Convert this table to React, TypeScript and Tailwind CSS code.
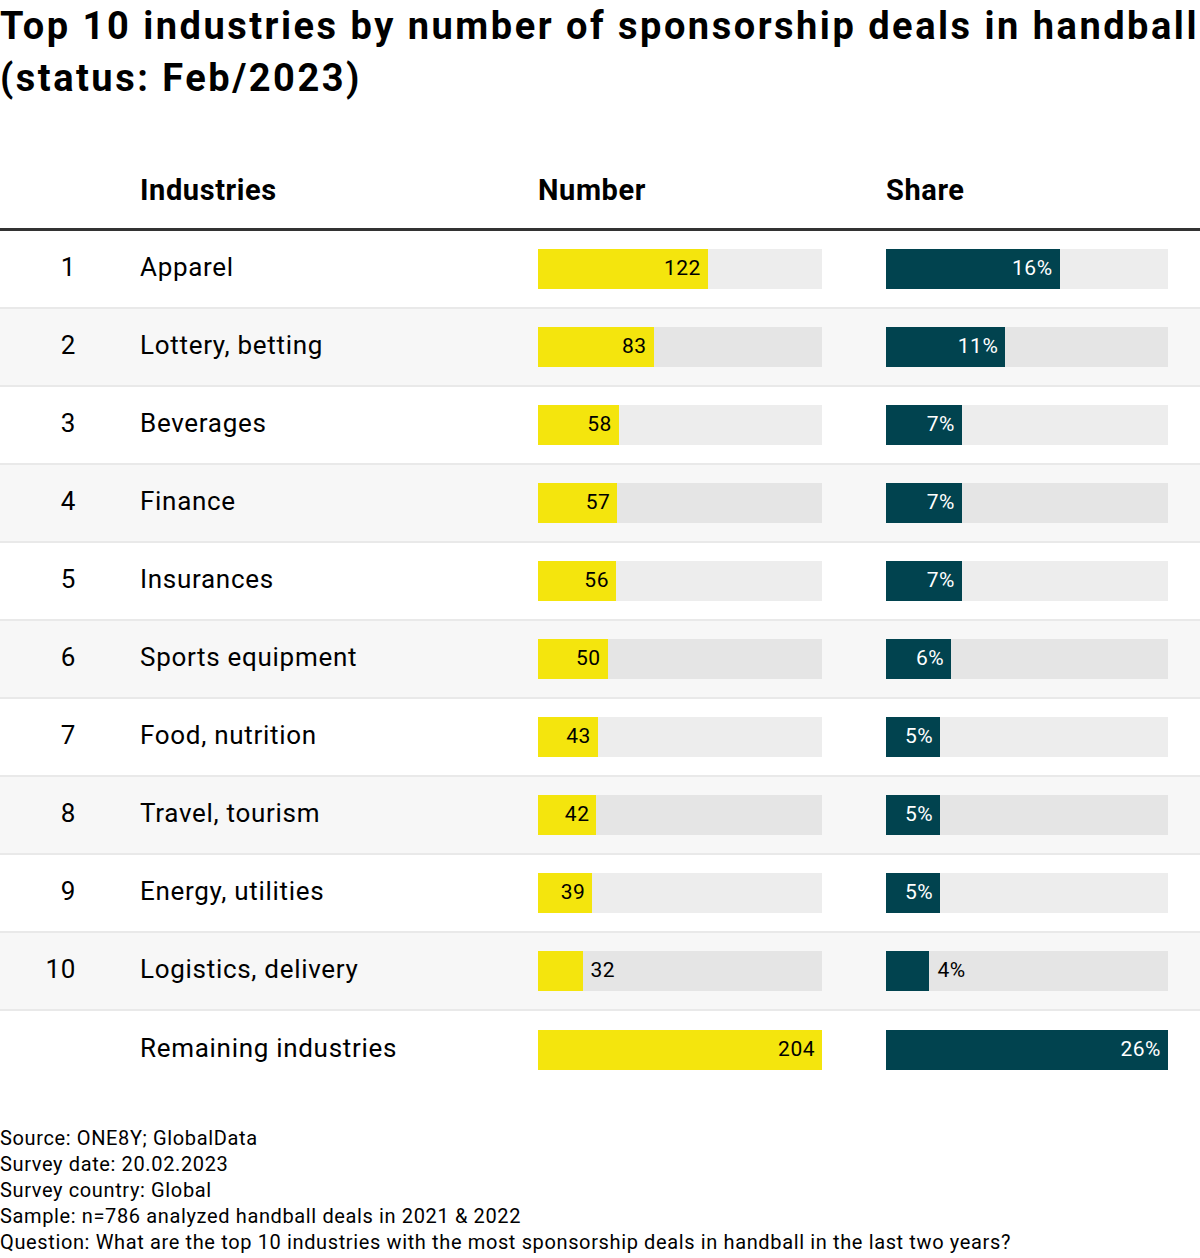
import React from "react";

type Row = { rank?: number; name: string; num: number; share: number };

const rows: Row[] = [
  { rank: 1, name: "Apparel", num: 122, share: 16 },
  { rank: 2, name: "Lottery, betting", num: 83, share: 11 },
  { rank: 3, name: "Beverages", num: 58, share: 7 },
  { rank: 4, name: "Finance", num: 57, share: 7 },
  { rank: 5, name: "Insurances", num: 56, share: 7 },
  { rank: 6, name: "Sports equipment", num: 50, share: 6 },
  { rank: 7, name: "Food, nutrition", num: 43, share: 5 },
  { rank: 8, name: "Travel, tourism", num: 42, share: 5 },
  { rank: 9, name: "Energy, utilities", num: 39, share: 5 },
  { rank: 10, name: "Logistics, delivery", num: 32, share: 4 },
  { name: "Remaining industries", num: 204, share: 26 },
];

const NUM_W = 284;
const SHARE_W = 282;

function Bar({
  value,
  max,
  width,
  label,
  dark,
}: {
  value: number;
  max: number;
  width: number;
  label: string;
  dark: boolean;
}) {
  const w = (value / max) * width;
  const inside = w >= 50;
  return (
    <div className="flex h-[40px] bg-black/[0.07]" style={{ width }}>
      <div
        className={
          "flex h-full items-center justify-end pr-[7px] " +
          (dark ? "bg-[#01434f] text-white" : "bg-[#f4e50d] text-black")
        }
        style={{ width: w }}
      >
        {inside && <span className="text-[21px] tracking-[0.5px]">{label}</span>}
      </div>
      {!inside && (
        <div className="flex h-full items-center pl-[8px] text-[21px] tracking-[0.5px] text-black">
          {label}
        </div>
      )}
    </div>
  );
}

export default function App() {
  return (
    <div
      className="w-[1200px] bg-white text-black"
      style={{ fontFamily: "Roboto, 'Liberation Sans', sans-serif" }}
    >
      <h1 className="whitespace-nowrap text-[38px] font-bold leading-[52px] tracking-[2.5px]">
        Top 10 industries by number of sponsorship deals in handball
        <br />
        (status: Feb/2023)
      </h1>

      <div className="grid grid-cols-[76px_64px_398px_284px_64px_282px_32px] items-center border-b-[3px] border-[#333333] pt-[68px] pb-[20px] text-[29px] font-bold leading-[36px] tracking-[0.6px]">
        <div />
        <div />
        <div>Industries</div>
        <div>Number</div>
        <div />
        <div>Share</div>
        <div />
      </div>

      {rows.map((r, i) => (
        <div
          key={r.name}
          className={
            "grid h-[78px] grid-cols-[76px_64px_398px_284px_64px_282px_32px] items-center text-[26px] tracking-[0.7px] " +
            (i % 2 === 1 ? "bg-[#f7f7f7] " : "bg-white ") +
            (i < rows.length - 1 ? "border-b-2 border-[#e9e9e9]" : "")
          }
        >
          <div className="pb-[3px] text-right">{r.rank ?? ""}</div>
          <div />
          <div className="pb-[3px]">{r.name}</div>
          <Bar value={r.num} max={204} width={NUM_W} label={String(r.num)} dark={false} />
          <div />
          <Bar value={r.share} max={26} width={SHARE_W} label={r.share + "%"} dark={true} />
          <div />
        </div>
      ))}

      <div className="pt-[36px] pb-[3px] text-[20px] leading-[26px] tracking-[0.63px]">
        <div>Source: ONE8Y; GlobalData</div>
        <div>Survey date: 20.02.2023</div>
        <div>Survey country: Global</div>
        <div>Sample: n=786 analyzed handball deals in 2021 &amp; 2022</div>
        <div className="whitespace-nowrap">Question: What are the top 10 industries with the most sponsorship deals in handball in the last two years?</div>
      </div>
    </div>
  );
}
